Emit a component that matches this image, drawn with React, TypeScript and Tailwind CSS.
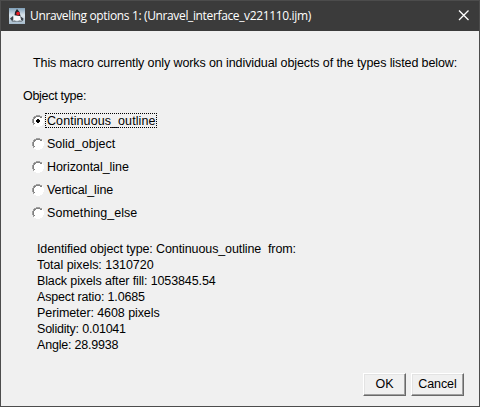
const options = [
  { label: 'Continuous_outline', spacing: 'tracking-[0.08px]' },
  { label: 'Solid_object', spacing: 'tracking-[0px]' },
  { label: 'Horizontal_line', spacing: 'tracking-[-0.06px]' },
  { label: 'Vertical_line', spacing: 'tracking-[-0.1px]' },
  { label: 'Something_else', spacing: 'tracking-[0.05px]' },
];

const messages = [
  { text: 'Identified object type: Continuous_outline  from:', spacing: 'tracking-[-0.105px]' },
  { text: 'Total pixels: 1310720', spacing: 'tracking-[-0.04px]' },
  { text: 'Black pixels after fill: 1053845.54', spacing: 'tracking-[-0.12px]' },
  { text: 'Aspect ratio: 1.0685', spacing: 'tracking-[-0.17px]' },
  { text: 'Perimeter: 4608 pixels', spacing: 'tracking-[-0.08px]' },
  { text: 'Solidity: 0.01041', spacing: 'tracking-[-0.21px]' },
  { text: 'Angle: 28.9938', spacing: 'tracking-[-0.2px]' },
];

function JavaIcon() {
  return (
    <svg width="16" height="16" viewBox="0 0 16 16" className="block shrink-0">
      <defs>
        <linearGradient id="sky" x1="0" y1="0" x2="0" y2="1">
          <stop offset="0" stopColor="#7f9fb8" />
          <stop offset="0.45" stopColor="#dbe5ec" />
          <stop offset="1" stopColor="#a5bacb" />
        </linearGradient>
      </defs>
      <rect width="16" height="16" fill="url(#sky)" />
      <path d="M8 1 L10.5 4 L11.5 8 L9 8 L5.5 7.5 L6 4 Z" fill="#20242a" />
      <path d="M1 10.5 L4 8 L5 12 L3 13 Z M11 8 L14.5 10.5 L14 13 L12 12 Z" fill="#3e464e" />
      <path d="M5 7.5 L11 8 L12 13 L8 12.5 L4 13 Z" fill="#f8f9fa" />
      <path d="M2.5 13 L5.5 12.3 L8 13.4 L10.5 12.3 L13.5 13 L12.5 14 H3.5 Z" fill="#7d8891" />
      <circle cx="9" cy="5.6" r="1.8" fill="#ec1c24" />
    </svg>
  );
}

function Radio({ checked }: { checked: boolean }) {
  return (
    <svg width="12" height="12" viewBox="0 0 12 12" className="-mt-0.5 block shrink-0" shapeRendering="crispEdges">
      <path d="M4 1H8V2H10V4H11V8H10V10H8V11H4V10H2V8H1V4H2V2H4Z" fill="#fff" />
      <path d="M4 0H8V1H4ZM2 1H4V2H2ZM8 1H10V2H8ZM1 2H2V4H1ZM0 4H1V8H0ZM1 8H2V10H1Z" fill="#a0a0a0" />
      <path d="M4 1H8V2H4ZM2 2H4V3H3V4H2ZM8 2H10V3H8ZM1 4H2V8H1ZM2 8H3V9H2Z" fill="#808080" />
      <path d="M10 2H11V4H10ZM11 4H12V8H11ZM10 8H11V10H10ZM8 10H10V11H8ZM4 11H8V12H4ZM2 10H4V11H2Z" fill="#fff" />
      {checked && <path d="M5 4H7V5H8V7H7V8H5V7H4V5H5Z" fill="#000" />}
    </svg>
  );
}

function PushButton({ label, size }: { label: string; size: string }) {
  return (
    <button
      className={`h-[23px] border border-t-white border-l-white border-r-[#696969] border-b-[#696969] bg-[#f0f0f0] text-[12.5px] leading-[21px] tracking-[-0.1px] shadow-[inset_-1px_-1px_0_#a0a0a0,inset_1px_1px_0_#e3e3e3] ${size}`}
    >
      {label}
    </button>
  );
}

export default function App() {
  return (
    <div className="flex h-[407px] w-[480px] flex-col border border-[#4c4c4c] bg-[#f0f0f0] font-['Liberation_Sans',Arial,sans-serif] text-[12.5px] text-black">
      <header className="flex h-[30px] shrink-0 items-center bg-[#3b3b3b] pr-[9px] pl-2 text-white">
        <JavaIcon />
        <h1 className="-mt-px ml-[5px] grow font-['Open_Sans','Noto_Sans',sans-serif] text-[12px] leading-4 tracking-[-0.36px] whitespace-nowrap">
          Unraveling options 1: (Unravel_interface_v221110.ijm)
        </h1>
        <svg width="12" height="12" viewBox="0 0 12 12" className="-mt-0.5 block shrink-0">
          <path d="M1 1.5L10.5 11M10.5 1.5L1 11" stroke="#fff" strokeWidth="1.3" />
        </svg>
      </header>
      <main className="flex grow flex-col">
        <p className="mt-6 ml-8 leading-4 tracking-[-0.1px] whitespace-nowrap">
          This macro currently only works on individual objects of the types listed below:
        </p>
        <p className="mt-[17px] ml-[22px] leading-4 tracking-[-0.3px]">Object type:</p>
        <div className="mt-[6px] ml-[31px] flex flex-col">
          {options.map((o, i) => (
            <label key={o.label} className="flex h-[23px] items-center">
              <Radio checked={i === 0} />
              <span
                className={`-mt-0.5 ml-px border border-dotted pt-0.5 pr-px pl-px leading-[11px] ${o.spacing} ${i === 0 ? 'border-black' : 'border-transparent'}`}
              >
                {o.label}
              </span>
            </label>
          ))}
        </div>
        <div className="mt-4 ml-9 leading-4 whitespace-pre">
          {messages.map((m) => (
            <div key={m.text} className={m.spacing}>
              {m.text}
            </div>
          ))}
        </div>
        <footer className="mt-auto mr-[15px] mb-[10px] flex justify-end gap-[5px]">
          <PushButton label="OK" size="w-[43px]" />
          <PushButton label="Cancel" size="w-[53px]" />
        </footer>
      </main>
    </div>
  );
}
